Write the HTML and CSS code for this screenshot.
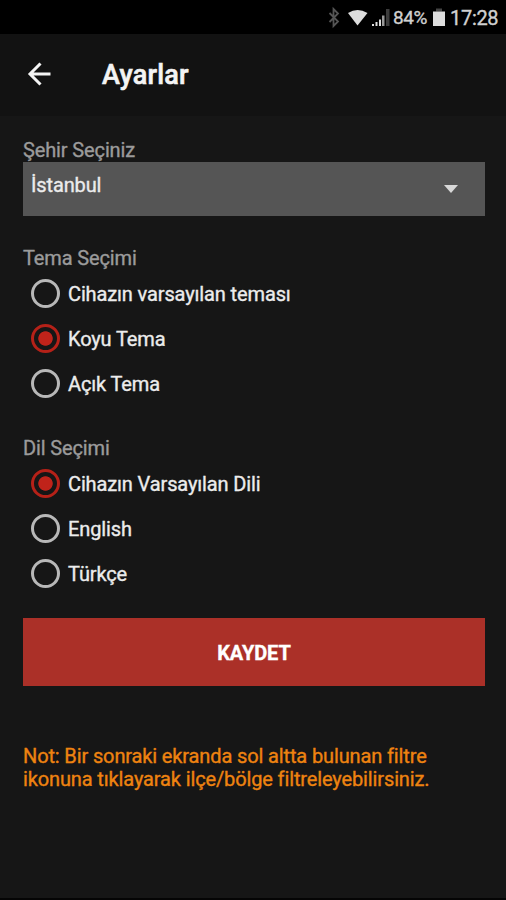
FILE: index.html
```html
<!DOCTYPE html>
<html lang="tr">
<head>
<meta charset="utf-8">
<title>Ayarlar</title>
<link rel="stylesheet" href="styles.css">
</head>
<body>
<div class="status">
  <svg class="status-icons" width="65" height="34" viewBox="0 0 65 34">
    <path d="M2.500 13 11 21.500 6.500 26V9L11 13.500 2.500 22" fill="none" stroke="#555" stroke-width="1.800"/>
    <path d="M21 13Q30.500 7 40.500 13L30.500 25.500Z" fill="#ddd"/>
    <path d="M45 24h2v2h-2zM48.500 22h2v4h-2zM52 19.500h2v6.500h-2z" fill="#ddd"/>
    <path d="M55 15.500h2.500V26H55z" fill="#999"/>
    <path d="M59 9h3.500v17H59z" fill="#3c3c3c"/>
  </svg>
  <span class="battery-level">84%</span>
  <svg class="battery" width="12" height="34" viewBox="0 0 12 34">
    <path d="M3 8.500h6v3H3z" fill="#444"/><path d="M0 11.500h12V26H0z" fill="#ddd"/>
  </svg>
  <span class="clock">17:28</span>
</div>
<header class="bar">
  <svg class="back" width="24" height="24" viewBox="0 0 24 24"><path d="M23.500 12H3M13.500 1.500 3 12 13.500 22.500" fill="none" stroke="#f4f4f4" stroke-width="3"/></svg>
  <h1>Ayarlar</h1>
</header>
<main>
  <section class="city">
    <h2>Şehir Seçiniz</h2>
    <div class="select"><span>İstanbul</span><svg width="14" height="8" viewBox="0 0 14 8"><path d="M0 0h14L7 8z" fill="#d8d8d8"/></svg></div>
  </section>
  <section class="group theme">
    <h2>Tema Seçimi</h2>
    <div class="option"><i class="radio"></i><span>Cihazın varsayılan teması</span></div>
    <div class="option"><i class="radio on"></i><span>Koyu Tema</span></div>
    <div class="option"><i class="radio"></i><span>Açık Tema</span></div>
  </section>
  <section class="group language">
    <h2>Dil Seçimi</h2>
    <div class="option"><i class="radio on"></i><span>Cihazın Varsayılan Dili</span></div>
    <div class="option"><i class="radio"></i><span>English</span></div>
    <div class="option"><i class="radio"></i><span>Türkçe</span></div>
  </section>
  <button class="save">KAYDET</button>
  <p class="note">Not: Bir sonraki ekranda sol altta bulunan filtre<br>ikonuna tıklayarak ilçe/bölge filtreleyebilirsiniz.</p>
</main>
</body>
</html>
```

FILE: styles.css
```css
* { box-sizing: border-box; }
body {
  margin: 0;
  height: 900px;
  overflow: hidden;
  background: #161616;
  color: #ececec;
  font: 20px/24px Roboto, "Liberation Sans", sans-serif;
  letter-spacing: -0.13px;
  -webkit-text-stroke: 0.35px currentColor;
  display: flex;
  flex-direction: column;
  border-bottom: 2px solid #050505;
}
h1, h2, p { margin: 0; }
.status {
  height: 34px;
  flex: none;
  background: #000;
  display: flex;
  align-items: center;
  padding-left: 327px;
  color: #d0d0d0;
  line-height: 34px;
}
.status svg { flex: none; }
.battery-level { width: 35px; margin-left: 1px; font-size: 19px; letter-spacing: -0.400px; padding-top: 2px; }
.battery { margin-left: 5px; }
.clock { margin-left: 5px; letter-spacing: -0.300px; padding-top: 2px; }
.bar {
  height: 82px;
  flex: none;
  background: #121212;
  display: flex;
  align-items: center;
  padding-left: 27px;
}
.back { margin-top: -2px; }
h1 { margin-left: 51px; font-size: 27px; font-weight: 500; line-height: 32px; letter-spacing: 0.200px; color: #f4f4f4; -webkit-text-stroke-width: 0.600px; }
main { padding: 22px 21px 0 23px; display: flex; flex-direction: column; }
h2 { font-size: 20px; font-weight: 400; line-height: 24px; color: #9b9b9b; }
.select {
  height: 54px;
  background: #555;
  display: flex;
  justify-content: space-between;
  padding: 11px 27px 0 8px;
}
.select svg { margin-top: 12px; }
.group { margin-top: 30px; }
.group h2 { margin-bottom: 1px; }
.option { height: 45px; display: flex; align-items: center; padding-left: 8px; }
.radio {
  width: 29px;
  height: 29px;
  flex: none;
  border: 3px solid #b8b8b8;
  border-radius: 50%;
  margin-right: 8px;
}
.radio.on { border-color: #b52118; background: radial-gradient(circle, #c0231a 6.800px, transparent 7.600px); }
.save {
  height: 68px;
  margin-top: 22px;
  padding: 2px 0 0;
  border: 0;
  background: #ab3028;
  color: #fff;
  font: 700 20px/24px Roboto, "Liberation Sans", sans-serif;
  letter-spacing: -0.100px;
}
.note { margin-top: 59px; color: #ee8310; line-height: 23px; white-space: nowrap; }
```
